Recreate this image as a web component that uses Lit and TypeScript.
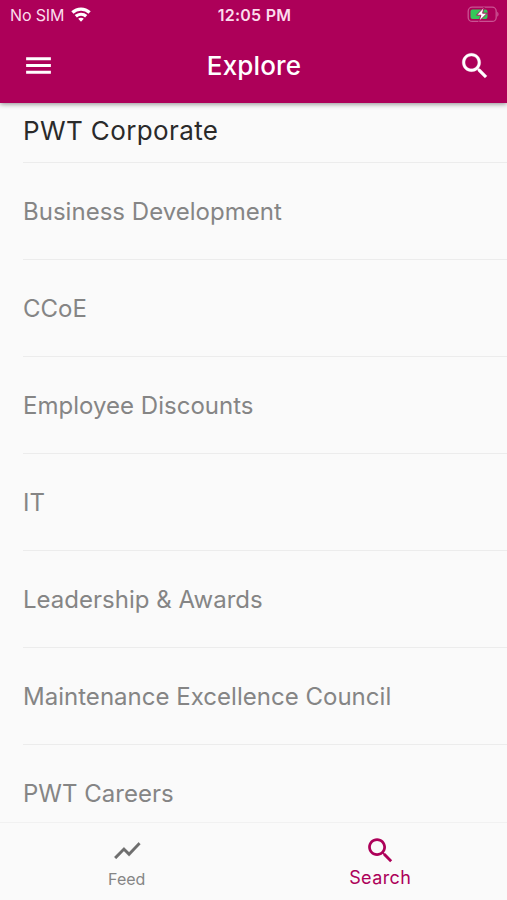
import { LitElement, html, css } from "lit";
import { customElement } from "lit/decorators.js";

const items = ["Business Development", "CCoE", "Employee Discounts", "IT", "Leadership & Awards", "Maintenance Excellence Council", "PWT Careers"];
const searchPath = "M15.5 14h-.79l-.28-.27C15.41 12.59 16 11.11 16 9.5 16 5.91 13.09 3 9.5 3S3 5.91 3 9.5 5.91 16 9.5 16c1.61 0 3.09-.59 4.23-1.57l.27.28v.79l5 4.99L20.49 19l-4.99-5zm-6 0C7.01 14 5 11.99 5 9.5S7.01 5 9.5 5 14 7.01 14 9.5 11.99 14 9.5 14z";

@customElement("app-root")
export class AppRoot extends LitElement {
  static styles = css`
    :host { display: flex; flex-direction: column; height: 900px; width: 507px; overflow: hidden; background: #fafafa; font-family: Inter, sans-serif; }
    * { box-sizing: border-box; }
    svg { display: block; fill: currentColor; }
    header { height: 103px; flex: none; background: #ad0059; color: #fff; box-shadow: 0 1px 5px rgba(0,0,0,.45); z-index: 1; }
    .status { height: 29px; display: grid; grid-template-columns: 1fr auto 1fr; align-items: center; padding: 0 8px 0 10px; font-size: 16px; color: #fbdcec; }
    .carrier { display: flex; align-items: center; gap: 7px; letter-spacing: -.15px; }
    .carrier svg { color: #fff; }
    .clock { font-weight: 600; letter-spacing: .25px; }
    .battery { justify-self: end; }
    .bar { height: 74px; display: grid; grid-template-columns: 1fr auto 1fr; align-items: center; padding: 0 15px 0 22px; }
    .bar > svg:first-child { margin-top: -1px; }
    .title { font-size: 26px; font-weight: 550; letter-spacing: .15px; margin: -1px 0 0 -6px; }
    .find { justify-self: end; margin-top: -1px; }
    main { flex: 1; min-height: 0; overflow: hidden; padding-left: 23px; }
    .row { height: 97px; display: flex; align-items: center; border-bottom: 1px solid #ececec; color: #858585; font-size: 24px; letter-spacing: .02px; white-space: nowrap; }
    .heading { height: 60px; color: #2a2a2a; font-size: 26px; letter-spacing: .38px; padding-bottom: 5px; }
    nav { height: 78px; flex: none; border-top: 1px solid #f1f1f1; display: grid; grid-template-columns: 1fr 1fr; }
    .tab { display: flex; flex-direction: column; align-items: center; color: #858585; font-size: 16px; padding-top: 12px; gap: 3px; }
    .tab svg { color: #6e6e6e; }
    .active { color: #ad0059; font-size: 18px; letter-spacing: .4px; padding-top: 11px; gap: 0; }
    .active svg { color: #ad0059; }
  `;
  render() {
    return html`
      <header>
        <div class="status">
          <div class="carrier"><span>No SIM</span><svg width="20" height="16" viewBox="0 0 20 16"><path d="M10 .5C6.3.5 3 1.9.3 4.3L2.5 6.7a11 11 0 0 1 15 0l2.2-2.4C17 1.9 13.7.5 10 .5zm0 5.2c-2.4 0-4.6.9-6.3 2.4l2.2 2.3a6.1 6.1 0 0 1 8.2 0l2.2-2.3A9.2 9.2 0 0 0 10 5.7zm0 5c-1.1 0-2.1.4-2.8 1l2.8 3 2.8-3c-.7-.6-1.7-1-2.8-1z"/></svg></div>
          <span class="clock">12:05 PM</span>
          <svg class="battery" width="32" height="17" viewBox="0 0 32 17"><rect x="1.2" y="1.2" width="28" height="14.2" rx="4" fill="none" stroke="#ca5393" stroke-width="1.3"/><rect x="3.5" y="3.5" width="17" height="9.6" rx="2" fill="#36c759"/><path d="M30.2 5.7v5c1.8-.7 1.8-4.3 0-5z" fill="#ca5393"/><path d="M17.2 1L9.5 9.2h4.4L11.8 15.6 20.2 7.2h-4.6z" fill="#fff" stroke="#ad0059" stroke-width=".9"/></svg>
        </div>
        <div class="bar">
          <svg width="33" height="33" viewBox="0 0 24 24"><path d="M3 18h18v-2.2H3V18zm0-4.9h18v-2.2H3v2.2zM3 6v2.2h18V6H3z"/></svg>
          <span class="title">Explore</span>
          <svg class="find" width="34" height="34" viewBox="0 0 24 24"><path d=${searchPath} stroke="currentColor" stroke-width=".2"/></svg>
        </div>
      </header>
      <main>
        <div class="row heading"><span>PWT Corporate</span></div>
        ${items.map((t) => html`<div class="row"><span>${t}</span></div>`)}
      </main>
      <nav>
        <div class="tab"><svg width="31" height="31" viewBox="0 0 24 24"><path stroke="currentColor" stroke-width=".2" d="M4 18.49l6-6.01 4 4L22.8 7.1l-1.41-1.41-7.39 7.76-4-4L2.5 16.99z"/></svg><span>Feed</span></div>
        <div class="tab active"><svg width="33" height="33" viewBox="0 0 24 24"><path d=${searchPath}/></svg><span>Search</span></div>
      </nav>`;
  }
}
